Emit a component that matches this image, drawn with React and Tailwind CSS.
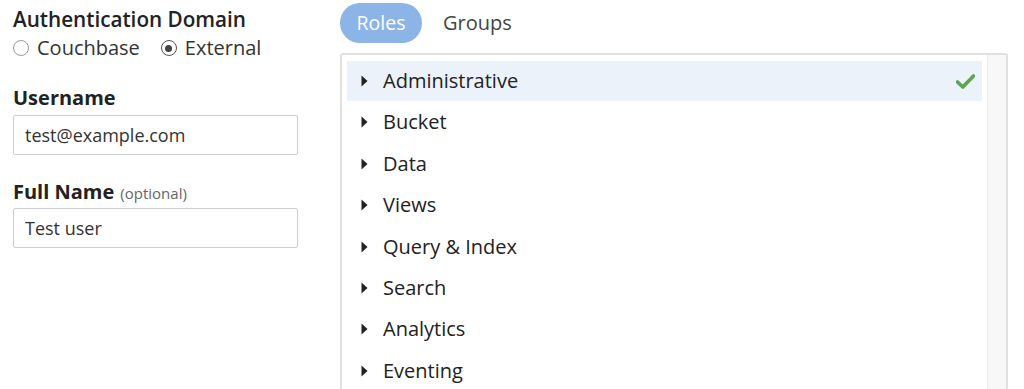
import React from 'react';

const roles = ['Administrative', 'Bucket', 'Data', 'Views', 'Query & Index', 'Search', 'Analytics', 'Eventing'];

function Caret() {
  return (
    <svg width="7" height="12" viewBox="0 0 7 12" className="shrink-0">
      <path d="M0.5 0.5 L6.5 6 L0.5 11.5 Z" fill="#222" />
    </svg>
  );
}

function Check() {
  return (
    <svg width="19" height="15" viewBox="0 0 19 15">
      <path d="M1.5 8 L6.8 13 L17.5 2" fill="none" stroke="#5aa84b" strokeWidth="3.6" strokeLinecap="round" strokeLinejoin="round" />
    </svg>
  );
}

function Radio({ checked, label }) {
  return (
    <label className="flex items-center gap-[8px]">
      <span
        className={
          checked
            ? 'flex h-[16px] w-[16px] items-center justify-center rounded-full border-[1.5px] border-[#555]'
            : 'h-[16px] w-[16px] rounded-full border border-[#9a9a9a]'
        }
      >
        {checked && <span className="h-[7px] w-[7px] rounded-full bg-[#444]" />}
      </span>
      <span>{label}</span>
    </label>
  );
}

export default function App() {
  return (
    <div className="flex h-[389px] w-[1024px] overflow-hidden bg-white text-[#222] font-['Open_Sans',sans-serif]">
      {/* left form */}
      <div className="w-[298px] shrink-0 pl-[13px]">
        <div className="pt-[5px] text-[20.7px] leading-[28px] font-semibold">Authentication Domain</div>
        <div className="mt-[1px] flex gap-[21px] text-[20px] leading-[28px] text-[#333]">
          <Radio label="Couchbase" />
          <Radio checked label="External" />
        </div>

        <div className="mt-[22px] text-[20px] leading-[28px] font-bold">Username</div>
        <div className="mt-[3px] flex h-[40px] items-center rounded-[2px] border border-[#cfcfcf] px-[11px] text-[18px] text-[#333]">
          test@example.com
        </div>

        <div className="mt-[23px] flex items-baseline gap-[6px] leading-[28px]">
          <span className="text-[20px] font-bold">Full Name</span>
          <span className="text-[15px] text-[#666]">(optional)</span>
        </div>
        <div className="mt-[1px] flex h-[40px] items-center rounded-[2px] border border-[#cfcfcf] px-[11px] text-[18px] text-[#333]">
          Test user
        </div>
      </div>

      {/* right roles */}
      <div className="ml-[42px] flex w-[668px] shrink-0 flex-col pt-[3px]">
        <div className="flex items-center">
          <button className="h-[40px] rounded-full bg-[#8db4e6] px-[16.5px] text-[19.5px] text-white">Roles</button>
          <button className="ml-[4px] h-[40px] px-[17px] text-[20px] text-[#444]">Groups</button>
        </div>

        <div className="mt-[10px] flex h-[400px] rounded-[3px] border-2 border-[#e0e0e0]">
          <div className="flex flex-1 flex-col gap-[1.4px] pl-[5px] pr-[5px] pt-[6px]">
            {roles.map((r, i) => (
              <div
                key={r}
                className={
                  'flex h-[40px] shrink-0 items-center pl-[14px] pr-[7px] text-[20px] ' +
                  (i === 0 ? 'bg-[#ebf2fa]' : '')
                }
              >
                <Caret />
                <span className="ml-[15px] flex-1">{r}</span>
                {i === 0 && <Check />}
              </div>
            ))}
          </div>
          <div className="w-[19px] shrink-0 border-l border-[#ececec] bg-[#f8f8f8]" />
        </div>
      </div>
    </div>
  );
}
